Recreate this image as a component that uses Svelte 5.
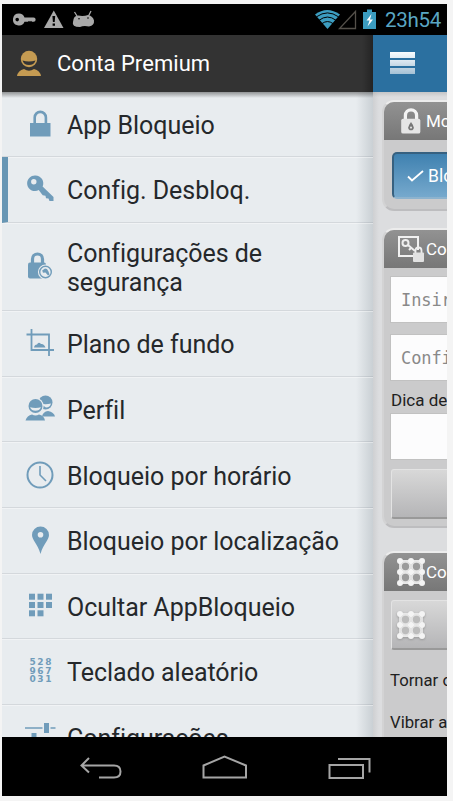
<script lang="ts">
	const items = [
		{ icon: 'lock', label: 'App Bloqueio' },
		{ icon: 'key', label: 'Config. Desbloq.', active: true },
		{ icon: 'security', label: 'Configurações de segurança', tall: true },
		{ icon: 'crop', label: 'Plano de fundo' },
		{ icon: 'people', label: 'Perfil' },
		{ icon: 'clock', label: 'Bloqueio por horário' },
		{ icon: 'pin', label: 'Bloqueio por localização' },
		{ icon: 'grid', label: 'Ocultar AppBloqueio' },
		{ icon: 'digits', label: 'Teclado aleatório' },
		{ icon: 'sliders', label: 'Configurações' },
	];

	const cells = [[0, 0], [8.5, 0], [17, 0], [0, 8.3], [8.5, 8.3], [17, 8.3], [0, 16.6], [8.5, 16.6]];
	const steps = [4, 15, 26];
</script>

{#snippet pattern()}
	<svg class="pattern" width="30" height="30" viewBox="0 0 30 30">
		<g stroke="#e9e9e9" stroke-width="1.8" fill="none">
			{#each steps as p}
				<path d="M4 {p}H26M{p} 4V26" />
			{/each}
		</g>
		<g fill="#9b9b9b" stroke="#e4e4e4" stroke-width="1.5">
			<circle cx="9.5" cy="9.5" r="4.4" />
			<circle cx="20.5" cy="9.5" r="4.4" />
			<circle cx="9.5" cy="20.5" r="4.4" />
			<circle cx="20.5" cy="20.5" r="4.4" />
		</g>
		<g fill="#f4f4f4">
			{#each steps as y}
				{#each steps as x}
					<circle cx={x} cy={y} r="3" />
				{/each}
			{/each}
		</g>
	</svg>
{/snippet}

<div class="phone">
	<div class="status">
		<svg width="90" height="31" viewBox="0 0 90 31" fill="#a9a9a9">
			<path fill-rule="evenodd" d="M12 9.500a6 6 0 0 1 5.500 4H26.500a1.800 1.800 0 0 1 0 4.300H25l-1-1-1 1-1-1-1 1H17.500A6 6 0 1 1 12 9.500ZM10.200 13.800a1.800 1.800 0 1 0 0 3.600 1.800 1.800 0 0 0 0-3.600Z" />
			<path d="M46.800 6.500 56.500 24h-19.500Z" />
			<path d="M45.400 12h2.800l-.5 6h-1.800ZM45.600 19.500h2.400v2.300h-2.400Z" fill="#000" />
			<path d="M67.500 8l2.500 4M84 7l-2.500 5" stroke="#a9a9a9" stroke-width="1.300" />
			<path d="M66.500 15.500Q67 12 71 11.500 76.500 12.500 81 11 86 12 87 16.500 87.500 21.500 82 22.500 76.500 21.500 73 23 64.500 23 66 18Z" />
			<circle cx="72" cy="14.700" r=".8" fill="#000" />
			<circle cx="81" cy="14" r=".8" fill="#000" />
		</svg>
		<div class="signals">
			<svg width="64" height="31" viewBox="0 0 64 31">
				<path d="M1 10.500Q13 1.500 26 10.500L13.500 25Z" fill="#3c9dc0" />
				<path d="M2.500 12.800Q13.500 5 24.500 12.800M5 16.300Q13.500 9.800 22 16.300M8 19.600Q13.500 15.500 19 19.600" fill="none" stroke="#000" stroke-width="1" />
				<path d="M25.500 24.500H41.500V7.500Z" fill="none" stroke="#54504a" stroke-width="1.300" />
				<path d="M49 8h4V5.500h5V8h4v17H49Z" fill="#3b9cc0" />
				<path d="m57.500 10-5 6.500h3l-2 6 5.500-7h-3Z" fill="#fff" />
			</svg>
			<span class="time">23h54</span>
		</div>
	</div>

	<div class="screen">
		<aside class="drawer">
			<header class="account">
				<svg width="24" height="27" viewBox="0 0 24 27" fill="#c59b52">
					<circle cx="12" cy="9" r="8.200" />
					<path d="M0 26Q1 20.500 7 19q5 3.500 10 0Q23 20.500 24 26Z" />
					<path d="M5.500 10.500Q12 12.500 18.500 10.500 17 15 12 15T5.500 10.500Z" fill="#333" />
				</svg>
				<span>Conta Premium</span>
			</header>
			<nav class="menu">
				{#each items as item}
					<div class="item" class:active={item.active} class:tall={item.tall}>
						<svg class="icon" width="30" height="30" viewBox="0 0 30 30" fill="#709cba">
							{#if item.icon === 'lock'}
								<path d="M5 14H25.500V27.500H5Z" />
								<path d="M9.700 15V8.500a5.600 5.600 0 0 1 11.200 0V15" fill="none" stroke="#709cba" stroke-width="2.600" />
							{:else if item.icon === 'key'}
								<path fill-rule="evenodd" d="M10.500 1.500a7.800 7.800 0 0 1 7.100 11L28.500 23v4h-4l-1-2.500-2.500-.2-.5-2.600-2.800-.4-4-5.200A7.800 7.800 0 1 1 10.500 1.500ZM8.800 5a2.700 2.700 0 1 0 0 5.400 2.700 2.700 0 0 0 0-5.400Z" />
							{:else if item.icon === 'security'}
								<rect x="3" y="11.500" width="18" height="16" rx="2" />
								<path d="M7.500 13V8a5 5 0 0 1 10 0v5" fill="none" stroke="#709cba" stroke-width="3.200" />
								<circle cx="20.500" cy="21" r="6.200" stroke="#e8ecef" stroke-width="2.800" />
								<circle cx="20.500" cy="21" r="5.800" fill="#e8ecef" stroke="#709cba" stroke-width="1.400" />
								<path d="M17.200 19.500 20 17.500l2 .5 1.500 2.500 1 3-1.500 1-2.500-3-2.500.2Z" />
							{:else if item.icon === 'crop'}
								<path d="M1.500 6.500H24V28M6.500 1V22H29" fill="none" stroke="#709cba" stroke-width="1.800" />
								<path d="M9 19.500q.5-3 3-3 1.500-3 4-.5 3-.5 4.500 3.500Z" />
							{:else if item.icon === 'people'}
								<circle cx="20.500" cy="8.500" r="7" />
								<path d="M15 9.500q5.500 1.500 11 0-1 4-5 4Z" fill="#e8ecef" />
								<path d="M17 22.500q1-5 6-5.500 6 1 7 5.500Z" />
								<circle cx="10.500" cy="12" r="8.200" fill="#e8ecef" />
								<circle cx="10.500" cy="12" r="7" />
								<path d="M5 13.200q5.500 1.500 11 0-1.500 3.500-5.500 3.500T5 13.200Z" fill="#e8ecef" />
								<path d="M.5 26.500Q2 21.500 7 20.500q3.500 2 7 0 5 1 6 6Z" />
							{:else if item.icon === 'clock'}
								<circle cx="15" cy="15" r="12.500" fill="none" stroke="#709cba" stroke-width="2" />
								<path d="M15 6V15L21 21" fill="none" stroke="#709cba" stroke-width="1.600" />
							{:else if item.icon === 'pin'}
								<path fill-rule="evenodd" d="M15.500 1.500a8.500 8.500 0 0 1 8.500 8.500c0 5-5.500 8.500-8.500 19-3-10.500-8.500-14-8.500-19a8.500 8.500 0 0 1 8.500-8.500Zm0 5.500a2.800 2.800 0 1 0 0 5.600 2.800 2.800 0 0 0 0-5.600Z" />
							{:else if item.icon === 'grid'}
								{#each cells as [x, y]}
									<rect x={x + 4} y={y + 2.700} width="6" height="6" />
								{/each}
							{:else if item.icon === 'digits'}
								<g class="digits">
									<text x="4.500" y="9.300">528</text>
									<text x="4.500" y="17.500">967</text>
									<text x="4.500" y="25.700">031</text>
								</g>
							{:else}
								<path d="M0 5.200H17.500v1.600H0ZM19 1h5v10h-5ZM25.500 5.200h5v1.600h-5ZM6.500 11h5v9h-5Z" />
							{/if}
						</svg>
						<span class="label">{item.label}</span>
					</div>
				{/each}
			</nav>
		</aside>

		<main class="page">
			<header class="topbar">
				<i></i>
				<i></i>
				<i></i>
			</header>
			<div class="cards">
				<section class="card mode">
					<h2>
						<svg width="28" height="30" viewBox="0 0 30 30">
							<path d="M9 14V9a6 6 0 0 1 12 0v5" fill="none" stroke="#f4f4f4" stroke-width="3.500" />
							<rect x="4.500" y="12.500" width="20.500" height="16" rx="2" fill="#e5e5e5" />
							<path d="M15 16q3 4 3 6a3 3 0 0 1-6 0q0-2 3-6Z" fill="#777" />
							<circle cx="15" cy="22" r="1.200" fill="#ddd" />
						</svg>
						Modo
					</h2>
					<div class="toggle">
						<svg width="17" height="14" viewBox="0 0 17 14"><path d="M1 7.500 5 11.500 16 2" fill="none" stroke="#fff" stroke-width="1.800" /></svg>
						Bloqueio
					</div>
				</section>

				<section class="card password">
					<h2>
						<svg width="28" height="30" viewBox="1 0 28 30">
							<path d="M17 22H3V3h19v13" fill="none" stroke="#f1f1f1" stroke-width="2" />
							<circle cx="9.500" cy="9" r="3" fill="none" stroke="#eee" stroke-width="2" />
							<path d="m12 11 7 6m-4-3-2 2" stroke="#eee" stroke-width="2" />
							<path d="M19.500 19v-2.500a3 3 0 0 1 6 0V19" fill="none" stroke="#eee" stroke-width="1.800" />
							<rect x="17" y="18.500" width="11" height="9.500" rx="1" fill="#e2e2e2" />
						</svg>
						Configurar
					</h2>
					<div class="field">Insira a senha</div>
					<div class="field">Confirme</div>
					<p class="hint">Dica de senha</p>
					<div class="field last"></div>
					<div class="button"></div>
				</section>

				<section class="card">
					<h2 class="wide">{@render pattern()}Configurar</h2>
					<div class="button">{@render pattern()}</div>
					<p class="option">Tornar o padrão visível</p>
					<p class="option">Vibrar ao tocar</p>
				</section>
			</div>
		</main>
	</div>

	<footer class="navbar">
		<svg width="445" height="59" viewBox="0 0 445 59" fill="none" stroke="#a5a5a5" stroke-width="2">
			<path d="M87 21 79.500 28.500l7.500 7M80 28.500H112q6.500 0 6.500 6T112 40.500H97" />
			<path d="M201.500 40.500V28.500L222.500 19.500 244 28.500V40.500Z" />
			<path d="M327.500 28H361V41H327.500ZM336 22H367.500V35.500" />
		</svg>
	</footer>
</div>

<style>
	:global(body) {
		background: #f4f4f4;
		overflow: hidden;
	}

	.phone {
		box-sizing: border-box;
		width: 453px;
		height: 801px;
		padding: 4px 6px 5px 2px;
		display: flex;
		flex-direction: column;
		font-family: Roboto, sans-serif;
		overflow: hidden;
	}

	svg {
		display: block;
		flex-shrink: 0;
		overflow: visible;
	}

	.status {
		height: 31px;
		padding-left: 5px;
		display: flex;
		justify-content: space-between;
		background: #000;
	}

	.signals {
		display: flex;
		gap: 7px;
		padding-right: 7px;
	}

	.time {
		width: 55px;
		white-space: nowrap;
		font-size: 20.5px;
		line-height: 32px;
		letter-spacing: -0.3px;
		color: #5aa6c3;
	}

	.screen {
		height: 702px;
		display: flex;
		overflow: hidden;
	}

	.drawer {
		width: 371px;
		flex-shrink: 0;
		overflow: hidden;
		background: linear-gradient(90deg, transparent 354px, rgba(80, 95, 105, 0.2)), #e8ecef;
	}

	.account {
		height: 57px;
		box-sizing: border-box;
		padding-left: 15px;
		display: flex;
		align-items: center;
		gap: 16px;
		background: linear-gradient(90deg, transparent 360px, rgba(0, 0, 0, 0.3)), #333;
		color: #fff;
		font-size: 22px;
		letter-spacing: 0.05px;
		line-height: 59px;
	}

	.menu {
		padding-top: 0.1px;
		background: linear-gradient(rgba(60, 60, 60, 0.5), transparent 6px);
	}

	.item {
		height: 65.6px;
		box-sizing: border-box;
		display: flex;
		align-items: center;
		border-bottom: 1px solid rgba(110, 120, 130, 0.17);
		box-shadow: 0 1px rgba(255, 255, 255, 0.4);
		padding-left: 23px;
		gap: 12px;
	}

	.item:first-child {
		height: 65px;
	}

	.item.active {
		border-left: 6px solid #6796b4;
		padding-left: 17px;
	}

	.item.tall {
		height: 88.5px;
	}

	.label {
		width: 290px;
		font-size: 25px;
		line-height: 29px;
		letter-spacing: -0.03px;
		color: #25282b;
		padding-top: 3px;
	}

	.item.tall .label {
		width: 230px;
	}

	.digits {
		font: bold 9px 'DejaVu Sans', sans-serif;
		letter-spacing: 1.6px;
	}

	.page {
		width: 74px;
		flex-shrink: 0;
		overflow: hidden;
		background: linear-gradient(90deg, #cfd0d2, #dcdddf 6px);
	}

	.topbar {
		height: 57px;
		box-sizing: border-box;
		padding: 17px 0 0 17px;
		display: flex;
		flex-direction: column;
		gap: 2px;
		background: #2b70a0;
	}

	.topbar i {
		width: 25px;
		height: 6px;
		background: linear-gradient(#f9fcfe, #e3edf4);
	}

	.topbar i:nth-child(2) {
		background: linear-gradient(#dfeaf2, #c5d7e4);
	}

	.topbar i:nth-child(3) {
		background: linear-gradient(#bfd2e0, #a5c1d5);
	}

	.cards {
		padding: 8px 0 0 9px;
		display: flex;
		flex-direction: column;
		background: linear-gradient(rgba(100, 100, 100, 0.2), transparent 5px);
	}

	.card {
		width: 260px;
		box-sizing: border-box;
		background: #cbcbcc;
		border: 2px solid #ececec;
		border-left-color: #d3d3d4;
		border-bottom-color: #bdbdbf;
		border-radius: 12px;
		overflow: hidden;
		height: 250px;
	}

	.card.mode {
		height: 111px;
		margin-bottom: 17px;
	}

	.card.password {
		height: 300px;
		margin-bottom: 23px;
	}

	h2 {
		height: 38px;
		margin: 0;
		padding-left: 13px;
		display: flex;
		align-items: center;
		gap: 1px;
		background: linear-gradient(#929292, #777);
		color: #fff;
		font-size: 17px;
		font-weight: 400;
	}

	h2.wide {
		padding-left: 12px;
		gap: 0;
	}

	.toggle {
		height: 47px;
		box-sizing: border-box;
		margin: 12px 8px 0;
		padding-left: 13px;
		display: flex;
		align-items: center;
		gap: 4px;
		border: 2px solid #376180;
		border-bottom-color: #8db3ce;
		border-radius: 5px;
		background: linear-gradient(#3f81b0, #76a9cd);
		color: #fff;
		font-size: 17.5px;
	}

	.field {
		height: 47px;
		box-sizing: border-box;
		margin: 8px 0 0 6px;
		padding-left: 10px;
		border: 1px solid #c1c1c1;
		background: #fcfcfd;
		font: 17px/46px 'DejaVu Sans Mono', monospace;
		letter-spacing: -0.1px;
		color: #898989;
	}

	.field + .field {
		margin-top: 11px;
	}

	.hint {
		height: 32px;
		margin: 0 0 0 7px;
		font-size: 17px;
		line-height: 39px;
		color: #202020;
	}

	.field.last {
		margin-top: 0;
	}

	.button {
		height: 50px;
		box-sizing: border-box;
		margin: 9px 0 0 7px;
		padding-left: 4px;
		display: flex;
		align-items: center;
		border: 1px solid #e3e3e3;
		border-bottom: 2px solid #999;
		border-radius: 3px;
		background: linear-gradient(#d8d8d8, #b5b5b7);
	}

	.button .pattern {
		filter: drop-shadow(0 1px 1px #999);
	}

	.button .pattern g:nth-child(2) {
		fill: #bcbcbc;
	}

	.option {
		height: 42px;
		margin: 0 0 0 6px;
		font-size: 16.7px;
		line-height: 62px;
		color: #202020;
		white-space: nowrap;
	}

	.navbar {
		height: 59px;
		background: #000;
	}
</style>
